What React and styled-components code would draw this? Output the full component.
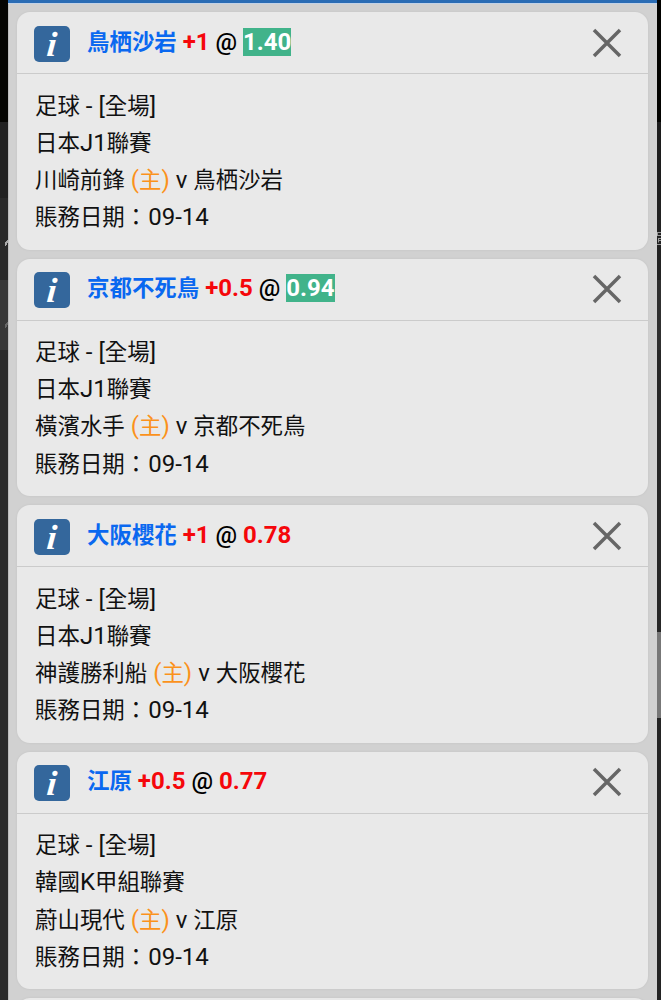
import React from 'react'
import styled, { createGlobalStyle } from 'styled-components'

const GlobalStyle = createGlobalStyle`
  * {
    box-sizing: border-box;
  }
  body {
    margin: 0;
    background: #2b2b2b;
    font-family: Roboto, "Noto Sans CJK TC", sans-serif;
    color: #111;
  }
`

const slips = [
  { team: '鳥栖沙岩', line: '+1', odds: '1.40', changed: true, league: '日本J1聯賽', home: '川崎前鋒', away: '鳥栖沙岩' },
  { team: '京都不死鳥', line: '+0.5', odds: '0.94', changed: true, league: '日本J1聯賽', home: '橫濱水手', away: '京都不死鳥' },
  { team: '大阪櫻花', line: '+1', odds: '0.78', league: '日本J1聯賽', home: '神護勝利船', away: '大阪櫻花' },
  { team: '江原', line: '+0.5', odds: '0.77', league: '韓國K甲組聯賽', home: '蔚山現代', away: '江原' },
]

// Chinese runs are set a little smaller than the latin text beside them
function Mixed({ children }) {
  return children
    .split(/([\u3000-\u9fff\uff00-\uffef]+)/)
    .filter(Boolean)
    .map((part, i) => (/[\u3000-\u9fff\uff00-\uffef]/.test(part) ? <slip.Han key={i}>{part}</slip.Han> : part))
}

function Slip({ team, line, odds, changed, league, home, away }) {
  return (
    <slip.Card>
      <slip.Header>
        <slip.Info><slip.Letter>i</slip.Letter></slip.Info>
        <slip.Title>
          <slip.Team><Mixed>{team}</Mixed></slip.Team> <slip.Red>{line}</slip.Red> <slip.At>@</slip.At>{' '}
          <slip.Odds $changed={changed}>{odds}</slip.Odds>
        </slip.Title>
        <slip.Close aria-label="close">
          <svg width="30" height="30" viewBox="0 0 30 30" fill="none" stroke="#666" strokeWidth="3.5">
            <path d="M2 2L28 28M28 2L2 28" />
          </svg>
        </slip.Close>
      </slip.Header>
      <slip.Body>
        <slip.Row><Mixed>足球 - [全場]</Mixed></slip.Row>
        <slip.Row><Mixed>{league}</Mixed></slip.Row>
        <slip.Row>
          <Mixed>{home}</Mixed> <slip.Home><Mixed>(主)</Mixed></slip.Home> v <Mixed>{away}</Mixed>
        </slip.Row>
        <slip.Row><Mixed>賬務日期：</Mixed><slip.Date>09-14</slip.Date></slip.Row>
      </slip.Body>
    </slip.Card>
  )
}

function App() {
  return (
    <page.Wrapper>
      <GlobalStyle />
      <page.LeftEdge>
        <page.Block $h={122} $bg="#050502" />
        <page.Block $h={76} $bg="#222" />
        <page.Block $h={82} $bg="#2a2a2a"><page.Tick /></page.Block>
        <page.Block $h={70} $bg="#373737"><page.Tick $dim /></page.Block>
        <page.Block $h={650} $bg="#2b2b2b" />
      </page.LeftEdge>
      <page.Sheet>
        {slips.map((s) => <Slip key={s.team} {...s} />)}
        <slip.Card />
      </page.Sheet>
      <page.RightEdge>
        <page.Block $h={122} $bg="#020200" />
        <page.Block $h={78} $bg="#1c1c1c" />
        <page.Block $h={80} $bg="#222">
          <page.Peek width="4" height="15" viewBox="0 0 4 15" fill="none" stroke="#999">
            <path d="M.5 1v4M.5 1.5H4M.5 4.5H4M1.5 7v4.5M1.5 7.5H4M1.5 9.5H4M0 13.5H4" />
          </page.Peek>
        </page.Block>
        <page.Block $h={70} $bg="#303030" />
        <page.Block $h={282} $bg="#262626" />
        <page.Block $h={86} $bg="#777" />
        <page.Block $h={282} $bg="#232323" />
      </page.RightEdge>
    </page.Wrapper>
  )
}

const page = {

  Wrapper: styled.div`
    display: grid;
    grid-template-columns: 8px 1fr 4px;
    width: 661px;
    height: 1000px;
    overflow: hidden;
  `,

  LeftEdge: styled.div`
    overflow: hidden;
  `,

  RightEdge: styled.div`
    overflow: hidden;
  `,

  Block: styled.div`
    display: flex;
    justify-content: flex-end;
    height: ${(p) => p.$h}px;
    padding-top: 38px;
    background: ${(p) => p.$bg};
  `,

  Tick: styled.i`
    flex: none;
    width: 3px;
    height: 10px;
    background: linear-gradient(125deg, transparent 50%, ${(p) => (p.$dim ? '#666' : '#aaa')} 50%, ${(p) => (p.$dim ? '#666' : '#aaa')} 75%, transparent 75%);
  `,

  // sliver of the page behind the sheet
  Peek: styled.svg`
    flex: none;
    margin-top: -7px;
  `,

  Sheet: styled.main`
    display: flex;
    flex-direction: column;
    gap: 9px;
    min-width: 0;
    height: 1000px;
    overflow: hidden;
    padding: 9px 9px 0;
    background: #d1d1d1;
    border-top: 3px solid #2b6db5;
    box-shadow: inset 0 1px 0 #c3d3e8, inset 1px 0 0 #bdbdbd;
  `,

}

const slip = {

  Card: styled.section`
    flex: none;
    height: 237.6px;
    border-radius: 13px;
    background: #e9e9e9;
    box-shadow: 0 0 3px rgba(0, 0, 0, 0.06);
  `,

  Header: styled.header`
    display: flex;
    align-items: center;
    height: 62px;
    padding: 0 26px 0 17px;
    border-bottom: 1px solid #cbcbcb;
  `,

  Info: styled.span`
    display: flex;
    justify-content: center;
    flex: none;
    width: 36px;
    height: 36px;
    margin-top: 2px;
    border-radius: 5px;
    background: #34679c;
  `,

  Letter: styled.span`
    color: #fff;
    font: italic bold 35px/37px "Liberation Serif", serif;
    transform: skewX(-5deg);
  `,

  Title: styled.h2`
    flex: 1;
    margin: 0 0 2px 17px;
    font-size: 24px;
    font-weight: 700;
    line-height: 28px;
    white-space: nowrap;
  `,

  Han: styled.span`
    font-size: 22.45px;
  `,

  Team: styled.span`
    color: #0a68f0;
  `,

  Red: styled.span`
    color: #f5070b;
  `,

  At: styled.span`
    font-weight: 500;
    color: #000;
  `,

  Odds: styled.span`
    color: ${(p) => (p.$changed ? '#fff' : '#f5070b')};
    background: ${(p) => (p.$changed ? '#41b38a' : 'transparent')};
  `,

  Close: styled.button`
    display: flex;
    padding: 0;
    border: 0;
    background: none;
  `,

  Body: styled.div`
    padding: 13.5px 18px;
  `,

  Row: styled.div`
    height: 37.2px;
    font-size: 24px;
    line-height: 37.2px;
    white-space: nowrap;
  `,

  Home: styled.span`
    color: #fb921b;
  `,

  Date: styled.span`
    margin-left: 1px;
  `,

}

export default App
